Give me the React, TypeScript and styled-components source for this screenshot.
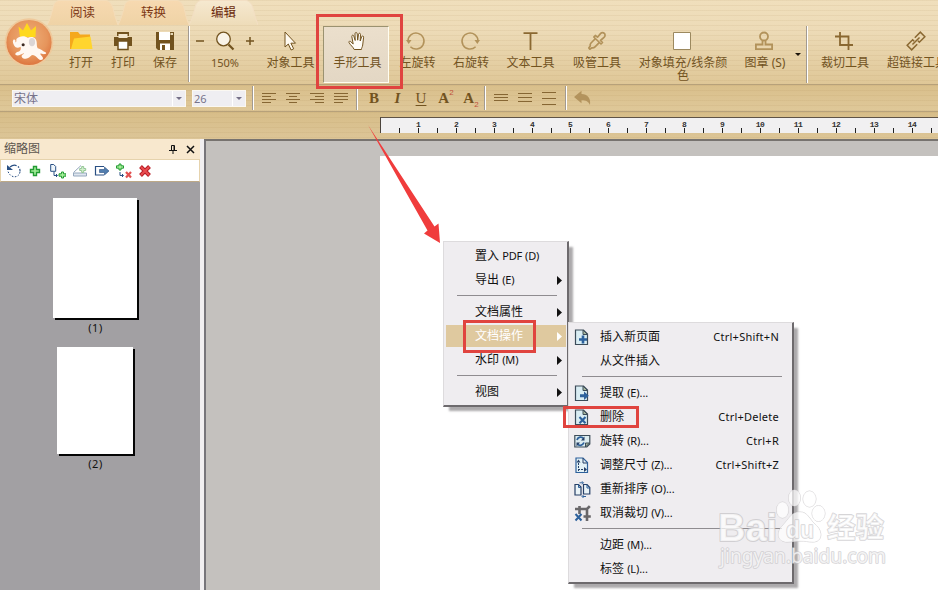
import React from "react";
import styled, { createGlobalStyle, css } from "styled-components";

const Global = createGlobalStyle`
  * { box-sizing: border-box; }
  html, body { margin: 0; padding: 0; overflow: hidden; }
  body { font-family: "Noto Sans", "Noto Sans CJK SC", sans-serif; font-size: 12px; line-height: 14px; }
  svg { display: block; flex: none; }
`;

const INK = "#72531f";
const FADED = "#b2925a";

const Window = styled.div`
  position: relative;
  width: 938px;
  height: 590px;
  overflow: hidden;
  display: flex;
  flex-direction: column;
  background: #c4c1be;
`;

const stripes = `repeating-linear-gradient(180deg, rgba(160,125,70,0.09) 0 1px, rgba(255,255,255,0) 1px 5px)`;

const Ribbon = styled.header`
  flex: none;
  height: 85px;
  display: flex;
  border-bottom: 1px solid #b7a17a;
  background: ${stripes}, linear-gradient(180deg, #f0dfbc 0, #eddbb7 30px, #dfc797 84px);
`;

const LogoSlot = styled.div`
  flex: none;
  width: 60px;
  padding: 17px 0 0 4px;
`;

const RibbonMain = styled.div`
  flex: none;
  width: 890px;
  display: flex;
  flex-direction: column;
`;

const Tabs = styled.nav`
  display: flex;
  height: 26px;
  margin-left: -13px;
`;

const Tab = styled.div<{ $w: number; $active?: boolean }>`
  flex: none;
  position: relative;
  width: ${(p) => p.$w}px;
  height: 25px;
  display: flex;
  justify-content: center;
  color: ${(p) => (p.$active ? "#6b2a0c" : "#7c3715")};
  font-size: 12.5px;
  line-height: 25px;
  svg { position: absolute; inset: 0; }
  span { position: relative; }
`;

const Tools = styled.div`
  display: flex;
  height: 58px;
  color: ${INK};
`;

const Tool = styled.div<{ $w: number; $pressed?: boolean }>`
  flex: none;
  width: ${(p) => p.$w}px;
  display: flex;
  flex-direction: column;
  align-items: center;
  padding-top: 5px;
  ${(p) =>
    p.$pressed &&
    css`
      height: 57px;
      margin: 0 0 0 2px;
      padding-top: 4px;
      border: 1px solid #9b9270;
      border-right-color: #fffdf0;
      border-bottom-color: #fffdf0;
      background: linear-gradient(180deg, #ebdfcc, #e3d7c4);
    `}
`;

const ToolLabel = styled.span<{ $shift?: number; $small?: boolean }>`
  margin-top: 5px;
  padding-left: ${(p) => p.$shift ?? 0}px;
  text-align: center;
  white-space: pre;
  font-size: ${(p) => (p.$small ? 11 : 12)}px;
  line-height: 13px;
`;

const ZoomRow = styled.div`
  display: flex;
  width: 60px;
  align-items: center;
  justify-content: space-between;
`;

const Divider = styled.i<{ $h: number; $ml?: number; $mr?: number }>`
  flex: none;
  width: 2px;
  height: ${(p) => p.$h}px;
  margin: 0 ${(p) => p.$mr ?? 0}px 0 ${(p) => p.$ml ?? 0}px;
  border-left: 1px solid #a29a91;
  border-right: 1px solid #fff;
`;

const DropSlot = styled.div`
  flex: none;
  width: 14px;
  padding: 27px 0 0 3px;
`;

const FormatBar = styled.div`
  flex: none;
  height: 27px;
  display: flex;
  align-items: center;
  padding-left: 12px;
  border-bottom: 1px solid #b7a17a;
  background: ${stripes}, linear-gradient(180deg, #d9bf8b, #dfc899);
`;

const Combo = styled.div<{ $w: number }>`
  flex: none;
  width: ${(p) => p.$w}px;
  height: 17px;
  margin-right: 6px;
  padding-left: 1px;
  display: flex;
  align-items: center;
  background: #efeef2;
  border: 1px solid #fbf8f2;
  color: #77738a;
  span { flex: 1; line-height: 15px; }
`;

const Size = styled.span`
  font-size: 11px;
`;

const ComboArrow = styled.div`
  height: 15px;
  width: 13px;
  padding: 6px 0 0 3px;
  border-left: 1px solid #fff;
`;

const Slot = styled.div<{ $w: number }>`
  flex: none;
  width: ${(p) => p.$w}px;
  height: 22px;
  display: flex;
  align-items: center;
  justify-content: center;
`;

const Letter = styled.span<{ $k: "b" | "i" | "u" | "a" }>`
  font-family: "Liberation Serif", serif;
  font-size: 15px;
  line-height: 16px;
  color: ${INK};
  font-style: ${(p) => (p.$k === "i" ? "italic" : "normal")};
  text-decoration: ${(p) => (p.$k === "u" ? "underline" : "none")};
  font-weight: ${(p) => (p.$k === "u" ? "normal" : "bold")};
  text-underline-offset: 2px;
`;

const Script = styled.span<{ $sub?: boolean }>`
  font-family: "Liberation Sans", sans-serif;
  font-size: 8px;
  line-height: 8px;
  color: #c0503a;
  align-self: ${(p) => (p.$sub ? "flex-end" : "flex-start")};
  margin-top: 2px;
`;

const RulerStrip = styled.div`
  flex: none;
  height: 27px;
  padding: 5px 0 0 380px;
  background: ${stripes}, linear-gradient(180deg, #d7bd88, #dcc597);
`;

const Ruler = styled.div`
  height: 16px;
  width: 600px;
  padding-left: 18px;
  display: flex;
  border-top: 1px solid #5f5346;
  border-left: 1px solid #4b443c;
  background:
    repeating-linear-gradient(90deg, transparent 0 18px, #222 18px 19px) 0 100% / 100% 5px no-repeat,
    #f1f0f1;
`;

const RulerMark = styled.span`
  flex: none;
  width: 38px;
  text-align: center;
  font: bold 8px/11px "Liberation Mono", monospace;
  letter-spacing: -0.6px;
  color: #333;
  margin-top: 1px;
`;

const Body = styled.main`
  flex: 1;
  display: flex;
  min-height: 0;
`;

const Sidebar = styled.aside`
  flex: none;
  width: 200px;
  display: flex;
  flex-direction: column;
  background: #a2a0a3;
`;

const SideHeader = styled.div`
  flex: none;
  height: 20px;
  display: flex;
  align-items: center;
  padding: 0 5px 0 4px;
  background: #f8e8ce;
  color: #5c564e;
  span { flex: 1; }
  svg + svg { margin-left: 9px; }
`;

const SideTools = styled.div`
  flex: none;
  height: 23px;
  display: flex;
  align-items: center;
  padding-left: 2px;
  background: #fff;
  border: 1px solid #e6d3ad;
  border-bottom-color: #bda987;
`;

const Thumbs = styled.div`
  display: flex;
  flex-direction: column;
  align-items: center;
  padding: 16px 10px 0 0;
`;

const Thumb = styled.div<{ $w: number; $h: number }>`
  width: ${(p) => p.$w}px;
  height: ${(p) => p.$h}px;
  background: #fff;
  box-shadow: 2px 2px 0 #050505;
`;

const ThumbLabel = styled.div`
  height: 29px;
  padding: 4px 0 0 1px;
  line-height: 12px;
  font-size: 11px;
  letter-spacing: 0.6px;
  color: #111;
`;

const Splitter = styled.div`
  flex: none;
  width: 4px;
  background: #f1eff1;
`;

const Workspace = styled.section`
  flex: 1;
  display: flex;
  padding: 15px 0 0 174px;
  border-top: 2px solid #77736f;
  border-left: 2px solid #77757a;
  background: #c4c1be;
`;

const Page = styled.div`
  flex: 1;
  background: #fff;
`;

const Menu = styled.div<{ $x: number; $y: number; $w: number; $h: number }>`
  position: absolute;
  left: ${(p) => p.$x}px;
  top: ${(p) => p.$y}px;
  width: ${(p) => p.$w}px;
  height: ${(p) => p.$h}px;
  display: flex;
  flex-direction: column;
  padding: 2px 1px 2px 2px;
  background: #efedf0;
  border: 1px solid #dddbdd;
  border-right: 2px solid #6d6a6d;
  border-bottom: 2px solid #6d6a6d;
  box-shadow: 5px 5px 2px -1px rgba(90, 85, 90, 0.5);
`;

const MenuItem = styled.div<{ $active?: boolean }>`
  flex: none;
  height: 24px;
  display: flex;
  align-items: center;
  color: ${(p) => (p.$active ? "#fff" : "#111")};
  background: ${(p) =>
    p.$active ? "linear-gradient(#dfc99f, #dfc99f) 0 1px / 100% 22px no-repeat" : "none"};
`;

const MenuIcon = styled.span`
  flex: none;
  width: 29px;
  padding-left: 3px;
`;

const MenuText = styled.span`
  flex: 1;
  white-space: pre;
  small { font-size: 11px; letter-spacing: -0.1px; }
`;

const Shortcut = styled.span`
  padding-right: 12px;
  font-size: 11px;
  letter-spacing: 0.25px;
`;

const MenuArrow = styled.span`
  width: 9px;
`;

const MenuLine = styled.i`
  flex: none;
  height: 1px;
  margin: 3px 9px 4px 11px;
  background: #8f8c90;
`;

const Marker = styled.div<{ $x: number; $y: number; $w: number; $h: number }>`
  position: absolute;
  left: ${(p) => p.$x}px;
  top: ${(p) => p.$y}px;
  width: ${(p) => p.$w}px;
  height: ${(p) => p.$h}px;
  border: 3px solid #e0443f;
`;

const Overlay = styled.svg`
  position: absolute;
  left: 0;
  top: 0;
  pointer-events: none;
`;

/* ---------- icons ---------- */

const Logo = () => (
  <svg width="50" height="52" viewBox="0 0 50 52">
    <defs>
      <radialGradient id="orb" cx="50%" cy="40%" r="58%">
        <stop offset="0" stopColor="#efb07a" />
        <stop offset="0.7" stopColor="#e6955c" />
        <stop offset="1" stopColor="#de7942" />
      </radialGradient>
    </defs>
    <circle cx="25" cy="25.500" r="24.300" fill="#efc99b" />
    <circle cx="25" cy="25.500" r="22.600" fill="url(#orb)" />
    <path d="M16 20 14.500 9.500l4.500 4L23 6l4 7.500 5-4.500-.5 11z" fill="#ffd91c" />
    <g transform="translate(-.6 1.200) scale(1.040)">
      <path d="M12.500 20c3-3 8-3.500 11-1 3-2 8-1 8.500 4 .2 2.500 0 4.500 1 6 3 .5 5 3 7 3.500 1.500.5 1.500 2 0 2-2 .3-3.500-.5-4.500-.5 0 2 3 3 2.500 5-.5 1.500-3 1.500-4.500 0-2-2-3.500-3.500-6-3.500-2 1.500-3.500 3.500-6 3.500-2 0-4-1-4-2.500s2-1.500 2.500-3c-2.500 1-6 3.500-8 2-1.500-1.500.5-3 3-3.500 2-1 2-3 1.500-4.500-2.500 1.500-5 1-6-1-1-2-2-4-1-5.500 1-1 2.500 0 2 1.500.5 1.500 1 1 1-2.500z" fill="#fff8f2" />
      <ellipse cx="27.500" cy="23" rx="3" ry="4" fill="#dcd6d6" />
      <circle cx="19" cy="25.500" r="1.500" fill="#3d2a22" />
    </g>
  </svg>
);

const Folder = () => (
  <svg width="24" height="20" viewBox="0 0 24 20">
    <path d="M1 1h8l2 2.500h10V18H1z" fill="#f5a81c" />
    <path d="M5 7.500 21.500 5.500 23.500 18H2z" fill="#ffd52e" />
  </svg>
);
const Printer = () => (
  <svg width="20" height="20" viewBox="0 0 20 20">
    <path d="M4 1h12v4H4zM1 6h18v9H1z" fill={INK} />
    <path d="M5.500 3h9v4h-9z" fill="#f3e6cd" />
    <path d="M5 10h10v8.500H5z" fill="#fff" stroke={INK} strokeWidth="1.500" />
  </svg>
);
const Floppy = () => (
  <svg width="20" height="20" viewBox="0 0 20 20">
    <path d="M1 1h18v18H3l-2-2z" fill={INK} />
    <path d="M4 1h11v8H4zM5 12.500h10V19H5z" fill="#fff" />
    <path d="M7 14h3v5H7z" fill={INK} />
    <path d="M15.500 2H18v2h-2.500z" fill="#e8d9b8" />
  </svg>
);
const Lens = () => (
  <svg width="20" height="20" viewBox="0 0 20 20">
    <path d="m13.500 13.500 5 5" stroke={INK} strokeWidth="2.200" />
    <circle cx="8.500" cy="8" r="6.800" fill="#f9f3e8" stroke={INK} strokeWidth="1.300" />
  </svg>
);
const Sign = ({ plus }: { plus?: boolean }) => (
  <svg width="10" height="10" viewBox="0 0 10 10">
    <path d={plus ? "M1 5h8M5 1v8" : "M1 5h8"} stroke={INK} strokeWidth="1.500" />
  </svg>
);
const Pointer = () => (
  <svg width="20" height="20" viewBox="0 0 20 20">
    <path d="M4 1v15l3.300-3 2.800 6 2.600-1.200-2.800-5.600h4.600z" fill="#fffaf0" stroke={INK} strokeWidth="1" />
  </svg>
);
const Hand = () => (
  <svg width="20" height="20" viewBox="0 0 20 20">
    <path d="M7.500 18.500c-1-2.500-4-4.500-5.200-7-.4-1.300 1-1.800 1.800-.8L6.500 13 5.100 5.500c-.2-1.500 1.600-1.800 2-.4L8.500 9.500 8.300 2.700c0-1.600 2-1.600 2.200 0l.5 6.500.8-6c.3-1.500 2.100-1.200 2 .3L13.500 10 15 5.700c.5-1.300 2.100-.8 1.900.5L16 14c-.2 2-1.300 3-1.300 4.500z" transform="translate(.7 0)" fill="#fffdf8" stroke={INK} strokeWidth="1" strokeLinejoin="round" />
  </svg>
);
const Rotate = ({ right }: { right?: boolean }) => (
  <svg width="20" height="20" viewBox="0 0 20 20">
    <g transform={right ? undefined : "matrix(-1 0 0 1 20 0)"}>
      <path d="M15.600 15.800A8 8 0 1 1 18 10" fill="none" stroke={FADED} strokeWidth="1.500" />
      <path d="M14.500 9h5.500l-2.700 4z" fill={FADED} />
    </g>
  </svg>
);
const TextT = () => (
  <svg width="20" height="20" viewBox="0 0 20 20">
    <path d="M2.500 2.200h14M9.500 2v17" stroke="#8a6831" strokeWidth="1.800" />
  </svg>
);
const Dropper = () => (
  <svg width="20" height="20" viewBox="0 0 20 20" fill="none" stroke={FADED} strokeWidth="1.700" strokeLinejoin="round">
    <path d="M8.500 7.500 4 12c-1 1.200-1 2-.8 3L1.800 17l1 1.200L5 16.800c1.300.2 2 0 3-1l4.500-4.500" />
    <path d="m6.800 6 7.200 7 1.500-1.500-2-2L17 6.300c1.500-1.500 1.200-3 .3-3.900s-2.600-1.200-3.800.2L10.500 6.200l-2.200-1.700z" />
  </svg>
);
const FillBox = () => (
  <svg width="20" height="20" viewBox="0 0 20 20">
    <path d="M.5 1.500h17v17h-17z" fill="#fff" stroke="#9c895f" />
  </svg>
);
const Stamp = () => (
  <svg width="20" height="20" viewBox="0 0 20 20" fill="none" stroke={FADED} strokeWidth="1.800">
    <circle cx="10" cy="5.500" r="4" />
    <path d="M8.500 9v4.500h-6.600v4.600h16.200v-4.600h-6.600V9" />
  </svg>
);
const Crop = () => (
  <svg width="20" height="20" viewBox="0 0 20 20" fill="none" stroke="#8a6831" strokeWidth="1.800">
    <path d="M5 1v13h13M0 5.500h13.500V19" />
  </svg>
);
const LinkIcon = () => (
  <svg width="20" height="20" viewBox="0 0 20 20" fill="none" stroke="#8a6831" strokeWidth="1.500">
    <g transform="rotate(-45 10 10)">
      <path d="M8.500 13.200H.7V6.800h7.800v2M11.500 6.800h7.800v6.400h-7.800v-2M5 10h10" />
    </g>
  </svg>
);
const Caret = ({ color, w = 6 }: { color: string; w?: number }) => (
  <svg width={w} height="3" viewBox="0 0 6 3">
    <path d="M0 0h6L3 3z" fill={color} />
  </svg>
);

const Lines = ({ rows }: { rows: number[][] }) => (
  <svg width="14" height="13" viewBox="0 0 14 13">
    {rows.map(([y, x1, x2]) => (
      <path key={y} d={`M${x1} ${y}.5H${x2}`} stroke="#866633" />
    ))}
  </svg>
);
const Undo = () => (
  <svg width="18" height="16" viewBox="0 0 18 16">
    <path d="M0 7 7.500.8V4c6 0 9.500 4 8.500 11-1.500-3.500-4-4.800-8.500-4.800v3z" fill="#b3935d" />
  </svg>
);

const SideIcon = ({ kind }: { kind: string }) => {
  const g = "#239b33";
  const n = "#294f83";
  return (
    <svg width="16" height="16" viewBox="0 0 16 16" fill="none">
      {kind === "rotate" && (
        <>
          <path d="M4 4c5-4 10.500-.5 10 4.500" stroke={n} strokeWidth="1.200" strokeDasharray="7 1.500 1.500 1.500" />
          <path d="M14 9c-1 6-9 7-12-.5" stroke={n} strokeDasharray="1.500 1.500" />
          <path d="M1 2v5h6z" fill={n} />
        </>
      )}
      {kind === "plus" && <path d="M6.500 3.500h3v3h3v3h-3v3h-3v-3h-3v-3h3z" fill="#a5ef9a" stroke={g} strokeWidth="1.400" />}
      {kind === "page" && (
        <>
          <path d="M.7 1.500h3l2 2v4.800h-5z" fill="#eef5fb" stroke={n} />
          <path d="M4 9v3.500h3M6 11l1.500 1.500L6 14" stroke={n} />
          <path d="M11.500 9h2v1.800H16v2.400h-2.500V15h-2v-1.800H9v-2.400h2.500z" fill="#a5ef9a" stroke={g} />
        </>
      )}
      {kind === "scan" && (
        <>
          <path d="M1.500 9.500 9 2.500M1.500 10h13v3h-13z" fill="#dfe6ef" stroke="#94a7bd" />
          <path d="M9.700 3.500h2v2h2v2h-2v2h-2v-2h-2v-2h2z" fill="#d3efcd" stroke="#93c696" />
        </>
      )}
      {kind === "export" && (
        <>
          <path d="M10 3.500H1.500v8.500H10" stroke={n} strokeWidth="1.200" />
          <path d="M5.500 6.500h5V4L15 8l-4.500 4V9.500h-5z" fill="#517dae" stroke={n} strokeWidth=".6" />
        </>
      )}
      {kind === "replace" && (
        <>
          <path d="M3 1h2v1.800h2.500v2.400H5V7H3V5.200H.5V2.800H3z" fill="#a5ef9a" stroke={g} />
          <path d="M4 9v3.500h3M6 11l1.500 1.500L6 14" stroke={n} />
          <path d="m10 9 5 5.500M15 9l-5 5.500" stroke="#e25050" strokeWidth="2.200" />
        </>
      )}
      {kind === "delete" && (
        <>
          <path d="m3.500 3.500 9 9M12.500 3.500l-9 9" stroke="#b51c25" strokeWidth="4" />
          <path d="m4 4 8 8M12 4l-8 8" stroke="#ea4c50" strokeWidth="2" />
        </>
      )}
    </svg>
  );
};

const DocIcon = ({ kind }: { kind: string }) => {
  const n = "#263f66";
  const b = "#2d619c";
  return (
    <svg width="17" height="17" viewBox="0 0 17 17" fill="none">
      {["add", "extract", "delete"].includes(kind) && (
        <>
          <path d="M1.500 1h8l4 4v10.500h-12z" fill="#d9edf3" stroke="#3c4c59" strokeWidth="1.200" />
          <path d="M9 1v4.500h4.500z" fill="#a6b79d" stroke="#3c4c59" />
        </>
      )}
      {kind === "add" && <path d="M9 6.500v8M5 10.500h8" stroke={b} strokeWidth="2.600" />}
      {kind === "extract" && <path d="M6 9.200h4V6.500l4.800 4.200L10 15v-2.700H6z" fill={b} />}
      {kind === "delete" && <path d="m5.500 8 6 6.200M11.500 8l-6 6.200" stroke={b} strokeWidth="2.100" />}
      {kind === "rotate" && (
        <>
          <path d="M.8 2.500h15v8.500l-3 3H.8z" fill="#dcecf0" stroke="#3c4c59" strokeWidth="1.200" />
          <path d="M11.500 14v-4h4z" fill="#a6b79d" stroke="#3c4c59" />
          <path d="M3 7C4 3.500 8 3.500 9.500 5.500M10 9.500c-1.500 3.500-5 3.500-6.500 1.500" stroke={b} strokeWidth="1.800" />
          <path d="M10.500 3.500v4H7zM2.500 13.500v-4H6z" fill={n} />
        </>
      )}
      {kind === "resize" && (
        <>
          <path d="M2 1h7l4.500 4.500v10H2z" fill="#e3f1f6" stroke={b} strokeWidth="1.200" />
          <path d="M9 1v5h4" stroke={n} />
          <path d="M4.500 14V4M4 12.500h8" stroke={n} strokeDasharray="2 1" />
          <path d="m2.500 5.500 2-3 2 3zM10 10l3 2.500-3 2.500z" fill={n} />
        </>
      )}
      {kind === "sort" && (
        <>
          <path d="M1 3.500h3.500L7 6v8H1zM9.500 3.500H13l2.800 3V13H9.500z" fill="#eaf3f7" stroke={n} strokeWidth="1.200" />
          <path d="M4.500 3.500V6.500H7M13 3.500V7h3M5.500 1.800H9M8 .3 9.500 1.800 8 3.300M8.500 15.500H12M9.500 14 8 15.500 9.500 17" stroke={b} />
        </>
      )}
      {kind === "crop" && (
        <>
          <path d="M5.500 1v6M1 4h12v12M9.500 11.500h7.300M5.500 7v2M13 4l2.800-2.800" stroke="#69676a" strokeWidth="2.600" />
          <path d="m1.500 9 6 6.500M7.500 9l-6 6.500" stroke={b} strokeWidth="2" />
        </>
      )}
    </svg>
  );
};

const RightArrow = () => (
  <svg width="6" height="9" viewBox="0 0 6 9">
    <path d="M0 0v9l5-4.500z" fill="currentColor" />
  </svg>
);

/* ---------- data ---------- */

type Entry = { text: string; key?: string; icon?: string; hot?: string; sub?: boolean; active?: boolean } | null;

const mainMenu: Entry[] = [
  { text: "置入 ", key: "PDF (D)" },
  { text: "导出 ", key: "(E)", sub: true },
  null,
  { text: "文档属性", sub: true },
  { text: "文档操作", sub: true, active: true },
  { text: "水印 ", key: "(M)", sub: true },
  null,
  { text: "视图", sub: true },
];

const subMenu: Entry[] = [
  { text: "插入新页面", icon: "add", hot: "Ctrl+Shift+N" },
  { text: "从文件插入" },
  null,
  { text: "提取 ", key: "(E)...", icon: "extract" },
  { text: "删除", icon: "delete", hot: "Ctrl+Delete" },
  { text: "旋转 ", key: "(R)...", icon: "rotate", hot: "Ctrl+R" },
  { text: "调整尺寸 ", key: "(Z)...", icon: "resize", hot: "Ctrl+Shift+Z" },
  { text: "重新排序 ", key: "(O)...", icon: "sort" },
  { text: "取消裁切 ", key: "(V)...", icon: "crop" },
  null,
  { text: "边距 ", key: "(M)..." },
  { text: "标签 ", key: "(L)..." },
];

const MenuList = ({ items }: { items: Entry[] }) => (
  <>
    {items.map((it, i) =>
      it ? (
        <MenuItem key={i} $active={it.active}>
          <MenuIcon>{it.icon && <DocIcon kind={it.icon} />}</MenuIcon>
          <MenuText>
            {it.text}
            {it.key && <small>{it.key}</small>}
          </MenuText>
          {it.hot && <Shortcut>{it.hot}</Shortcut>}
          {it.sub && (
            <MenuArrow>
              <RightArrow />
            </MenuArrow>
          )}
        </MenuItem>
      ) : (
        <MenuLine key={i} />
      ),
    )}
  </>
);

const TabItem = ({ w, label, active }: { w: number; label: string; active?: boolean }) => (
  <Tab $w={w} $active={active}>
    <svg width={w} height="25" viewBox={`0 0 ${w} 25`}>
      <defs>
        <linearGradient id={`tab${label}`} x1="0" y1="0" x2="0" y2="1">
          <stop offset="0" stopColor={active ? "#f6e9d0" : "#f7d9b0"} />
          <stop offset="1" stopColor={active ? "#eedcb9" : "#efd3a6"} />
        </linearGradient>
      </defs>
      <path
        d={`M0 25 Q3 20 6 8 Q7 1 12 .5 H${w - 12} Q${w - 7} 1 ${w - 5} 8 Q${w - 3} 18 ${w} 25`}
        fill={`url(#tab${label})`}
        stroke={active ? "#f3dfc4" : "#f4dcb9"}
      />
    </svg>
    <span>{label}</span>
  </Tab>
);

const Watermark = () => (
  <g fill="#fff" fillOpacity="0.72" stroke="#c4c2c5" strokeOpacity="0.7" strokeWidth="1" paintOrder="stroke" strokeLinejoin="round">
    <ellipse cx="782.500" cy="510" rx="6" ry="8" />
    <ellipse cx="794.500" cy="498" rx="6" ry="8" />
    <ellipse cx="809.500" cy="499" rx="6.500" ry="8" />
    <ellipse cx="818.500" cy="513.500" rx="6.500" ry="8" />
    <path d="M800 512c8 0 9 7 15 12 9 8 7 18-2 18-5 0-8-1-13-1s-8 1-13 1c-9 0-12-9-4-17 6-6 8-13 17-13z" />
    <text x="718" y="541" fontFamily="Liberation Sans, sans-serif" fontWeight="bold" fontSize="38" textLength="59" lengthAdjust="spacingAndGlyphs" strokeWidth="2">Bai</text>
    <text x="786" y="538" fontFamily="Liberation Sans, sans-serif" fontWeight="bold" fontSize="23" textLength="28" lengthAdjust="spacingAndGlyphs" strokeWidth="1.500">du</text>
    <text x="827" y="538" fontFamily="Noto Sans CJK SC, sans-serif" fontWeight="bold" fontSize="28.500" textLength="57" strokeWidth="1.600">经验</text>
    <text x="720" y="563" fontFamily="Noto Sans, sans-serif" fontSize="19" textLength="166" lengthAdjust="spacingAndGlyphs" strokeWidth="1.600">jingyan.baidu.com</text>
  </g>
);

export default function App() {
  return (
    <Window>
      <Global />
      <Ribbon>
        <LogoSlot>
          <Logo />
        </LogoSlot>
        <RibbonMain>
          <Tabs>
            <TabItem w={71} label="阅读" />
            <TabItem w={71} label="转换" />
            <TabItem w={69} label="编辑" active />
          </Tabs>
          <Tools>
            <Tool $w={42}><Folder /><ToolLabel>打开</ToolLabel></Tool>
            <Tool $w={42}><Printer /><ToolLabel>打印</ToolLabel></Tool>
            <Tool $w={42}><Floppy /><ToolLabel>保存</ToolLabel></Tool>
            <Divider $h={56} $ml={2} />
            <Tool $w={70}>
              <ZoomRow><Sign /><Lens /><Sign plus /></ZoomRow>
              <ToolLabel $small>150%</ToolLabel>
            </Tool>
            <Tool $w={61}><Pointer /><ToolLabel>对象工具</ToolLabel></Tool>
            <Tool $w={66} $pressed><Hand /><ToolLabel $shift={3}>手形工具</ToolLabel></Tool>
            <Tool $w={54}><Rotate /><ToolLabel $shift={3}>左旋转</ToolLabel></Tool>
            <Tool $w={54}><Rotate right /><ToolLabel $shift={2}>右旋转</ToolLabel></Tool>
            <Tool $w={67}><TextT /><ToolLabel>文本工具</ToolLabel></Tool>
            <Tool $w={66}><Dropper /><ToolLabel>吸管工具</ToolLabel></Tool>
            <Tool $w={106}><FillBox /><ToolLabel>{"对象填充/线条颜\n色"}</ToolLabel></Tool>
            <Tool $w={56}><Stamp /><ToolLabel $shift={2}>图章 (S)</ToolLabel></Tool>
            <DropSlot><Caret color="#1c140a" /></DropSlot>
            <Divider $h={57} />
            <Tool $w={74}><Crop /><ToolLabel>裁切工具</ToolLabel></Tool>
            <Tool $w={68}><LinkIcon /><ToolLabel $shift={2}>超链接工具</ToolLabel></Tool>
          </Tools>
        </RibbonMain>
      </Ribbon>

      <FormatBar>
        <Combo $w={174}><span>宋体</span><ComboArrow><Caret color="#767189" /></ComboArrow></Combo>
        <Combo $w={54}><Size>26</Size><ComboArrow><Caret color="#767189" /></ComboArrow></Combo>
        <Divider $h={24} $mr={3} />
        <Slot $w={24}><Lines rows={[[1, 0, 14], [4, 0, 9], [7, 0, 14], [10, 0, 9]]} /></Slot>
        <Slot $w={24}><Lines rows={[[1, 0, 14], [4, 3, 11], [7, 0, 14], [10, 3, 11]]} /></Slot>
        <Slot $w={24}><Lines rows={[[1, 0, 14], [4, 5, 14], [7, 0, 14], [10, 5, 14]]} /></Slot>
        <Slot $w={24}><Lines rows={[[1, 0, 14], [4, 0, 14], [7, 0, 14], [10, 0, 9]]} /></Slot>
        <Divider $h={24} $ml={3} $mr={4} />
        <Slot $w={24}><Letter $k="b">B</Letter></Slot>
        <Slot $w={23}><Letter $k="i">I</Letter></Slot>
        <Slot $w={24}><Letter $k="u">U</Letter></Slot>
        <Slot $w={26}><Letter $k="a">A</Letter><Script>2</Script></Slot>
        <Slot $w={24}><Letter $k="a">A</Letter><Script $sub>2</Script></Slot>
        <Divider $h={24} $ml={1} $mr={3} />
        <Slot $w={24}><Lines rows={[[2, 0, 14], [5, 0, 14], [8, 0, 14]]} /></Slot>
        <Slot $w={24}><Lines rows={[[1, 0, 14], [5, 0, 14], [9, 0, 14]]} /></Slot>
        <Slot $w={24}><Lines rows={[[0, 0, 14], [6, 0, 14], [12, 0, 14]]} /></Slot>
        <Divider $h={24} $ml={4} $mr={3} />
        <Slot $w={26}><Undo /></Slot>
      </FormatBar>

      <RulerStrip>
        <Ruler>
          {Array.from({ length: 14 }, (_, i) => (
            <RulerMark key={i}>{i + 1}</RulerMark>
          ))}
        </Ruler>
      </RulerStrip>

      <Body>
        <Sidebar>
          <SideHeader>
            <span>缩略图</span>
            <svg width="8" height="9" viewBox="0 0 8 9" fill="none" stroke="#111">
              <path d="M2.500 5V.5h3V5M0 5.500h8M4 6v3M5 1v4" />
            </svg>
            <svg width="9" height="9" viewBox="0 0 9 9" stroke="#111" strokeWidth="1.500">
              <path d="m1 1 7 7M8 1 1 8" />
            </svg>
          </SideHeader>
          <SideTools>
            {[["rotate", 21], ["plus", 22], ["page", 23], ["scan", 22], ["export", 22], ["replace", 21], ["delete", 22]].map(([k, w]) => (
              <Slot key={k} $w={w as number}><SideIcon kind={k as string} /></Slot>
            ))}
          </SideTools>
          <Thumbs>
            <Thumb $w={84} $h={120} />
            <ThumbLabel>(1)</ThumbLabel>
            <Thumb $w={76} $h={107} />
            <ThumbLabel>(2)</ThumbLabel>
          </Thumbs>
        </Sidebar>
        <Splitter />
        <Workspace>
          <Page />
        </Workspace>
      </Body>

      <Menu $x={443} $y={241} $w={126} $h={166}>
        <MenuList items={mainMenu} />
      </Menu>
      <Menu $x={568} $y={322} $w={226} $h={262}>
        <MenuList items={subMenu} />
      </Menu>

      <Marker $x={316} $y={14} $w={87} $h={75} />
      <Marker $x={463} $y={320} $w={73} $h={33} />
      <Marker $x={563} $y={406} $w={76} $h={22} />
      <Overlay width="938" height="590" viewBox="0 0 938 590">
        <path d="M368 125 434.500 226.500l4-3 1.500 19.500-16-9.500 3.500-3z" fill="#f03c3c" />
        <Watermark />
      </Overlay>
    </Window>
  );
}
